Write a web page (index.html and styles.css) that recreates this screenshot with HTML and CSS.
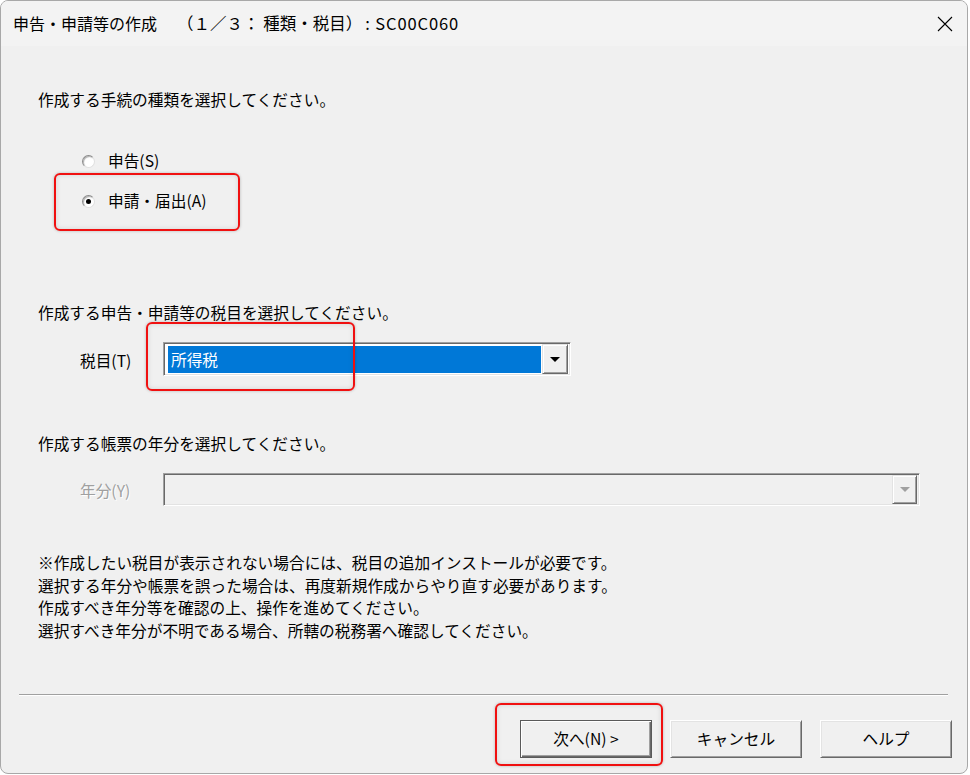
FILE: index.html
```html
<!DOCTYPE html>
<html lang="ja">
<head>
<meta charset="utf-8">
<title>申告・申請等の作成</title>
<link rel="stylesheet" href="styles.css">
</head>
<body>
<div class="window">
  <div class="titlebar">
    <span class="title"><span class="t1">申告・申請等の作成</span><span class="t2">（１／３： 種類・税目）</span><span class="t3">: SC00C060</span></span>
    <svg class="close" width="16" height="16" viewBox="0 0 16 16"><path d="M1 1 L15 15 M15 1 L1 15" stroke="#000" stroke-width="1.1" fill="none"/></svg>
  </div>
  <div class="content">
    <p class="q q1">作成する手続の種類を選択してください。</p>
    <div class="radios">
      <div class="radio"><span class="rb"></span><span>申告(S)</span></div>
      <div class="radio"><span class="rb checked"></span><span>申請・届出(A)</span></div>
    </div>
    <p class="q q2">作成する申告・申請等の税目を選択してください。</p>
    <div class="field">
      <span class="flabel">税目(T)</span>
      <div class="combo combo-tax">
        <div class="value selected">所得税</div>
        <div class="dd"><svg width="10" height="5" viewBox="0 0 10 5"><polygon points="0,0 10,0 5,5" fill="#000"/></svg></div>
      </div>
    </div>
    <p class="q q3">作成する帳票の年分を選択してください。</p>
    <div class="field field2">
      <span class="flabel disabled">年分(Y)</span>
      <div class="combo combo-year">
        <div class="value"></div>
        <div class="dd"><svg width="10" height="5" viewBox="0 0 10 5"><polygon points="0,0 10,0 5,5" fill="#a0a0a0"/></svg></div>
      </div>
    </div>
    <div class="notes">
      <p>※作成したい税目が表示されない場合には、税目の追加インストールが必要です。</p>
      <p>選択する年分や帳票を誤った場合は、再度新規作成からやり直す必要があります。</p>
      <p>作成すべき年分等を確認の上、操作を進めてください。</p>
      <p>選択すべき年分が不明である場合、所轄の税務署へ確認してください。</p>
    </div>
  </div>
  <div class="sep"></div>
  <div class="buttons">
    <button class="btn default">次へ(N) &gt;</button>
    <button class="btn">キャンセル</button>
    <button class="btn">ヘルプ</button>
  </div>
  <div class="mark mark1"></div>
  <div class="mark mark2"></div>
  <div class="mark mark3"></div>
</div>
</body>
</html>
```

FILE: styles.css
```css
* { box-sizing: border-box; }
html, body { margin: 0; padding: 0; background: #ffffff; }
body {
  font-family: "Noto Sans CJK JP", "Noto Sans", sans-serif;
  font-size: 15.7px;
  color: #000;
  text-spacing-trim: space-all;
}
.window {
  position: relative;
  width: 968px;
  height: 774px;
  border: 1px solid #a8a8a8;
  border-radius: 8px;
  background: #f0f0f0;
  overflow: hidden;
}
.titlebar {
  height: 45px;
  background: #f3f3f3;
  display: flex;
  align-items: center;
  justify-content: space-between;
  padding: 0 14px 0 12px;
}
.title {
  display: flex;
  align-items: baseline;
  line-height: 20px;
  margin-top: -1px;
  white-space: nowrap;
}
.t1 { font-size: 16px; }
.t2 { font-size: 16.5px; margin-left: 20px; }
.t3 { font-size: 16.5px; margin-left: 3px; letter-spacing: 0.9px; }
.close { display: block; }
.content {
  padding-left: 37px;
}
.q {
  margin: 0;
  line-height: 23px;
}
.q1 { margin-top: 42px; }
.radios {
  margin-top: 38px;
  padding-left: 44px;
  display: flex;
  flex-direction: column;
  gap: 16px;
}
.radio {
  height: 24px;
  display: flex;
  align-items: center;
  gap: 13px;
  line-height: 24px;
}
.rb {
  width: 13px;
  height: 13px;
  border-radius: 50%;
  background: #fff;
  border: 1px solid;
  border-color: #8a8a8a #e0e0e0 #e0e0e0 #8a8a8a;
  box-shadow: inset 1px 1px 1px #b0b0b0;
  display: flex;
  align-items: center;
  justify-content: center;
  flex: none;
}
.rb.checked::after {
  content: "";
  width: 5px;
  height: 5px;
  border-radius: 50%;
  background: #000;
}
.q2 { margin-top: 88px; }
.field {
  margin-top: 18px;
  padding-left: 42px;
  display: flex;
  align-items: center;
}
.flabel {
  width: 83px;
  line-height: 23px;
  padding-top: 2px;
}
.flabel.disabled {
  color: #a0a0a0;
  text-shadow: 1px 1px 0 #ffffff;
}
.combo {
  height: 34px;
  display: flex;
  border: 1px solid;
  border-color: #a0a0a0 #ffffff #ffffff #a0a0a0;
  box-shadow: inset 1px 1px 0 #696969, inset -1px -1px 0 #e3e3e3;
  padding: 2px;
  background: #ffffff;
}
.combo-tax { width: 408px; }
.value {
  flex: 1;
  color: #fff;
  line-height: 27px;
  padding-left: 3px;
  margin: 1px 1px 0 2px;
  height: 27px;
}
.value.selected { background: #0078d7; }
.dd {
  width: 26px;
  height: 30px;
  margin-top: -1px;
  background: #f0f0f0;
  border: 1px solid;
  border-color: #e3e3e3 #696969 #696969 #e3e3e3;
  box-shadow: inset 1px 1px 0 #ffffff, inset -1px -1px 0 #a0a0a0;
  display: flex;
  align-items: center;
  justify-content: center;
}
.dd svg { display: block; }
.field2 { margin-top: 18px; }
.combo-year {
  width: 757px;
  height: 33px;
  background: #f0f0f0;
}
.combo-year .dd { height: 29px; width: 25px; }
.q3 { margin-top: 56px; }
.notes {
  margin-top: 46px;
}
.notes p {
  margin: 0;
  line-height: 22.7px;
}
.sep {
  margin: 51px 0 0 18px;
  width: 929px;
  height: 2px;
  border-top: 1px solid #a0a0a0;
  border-bottom: 1px solid #ffffff;
}
.buttons {
  margin-top: 24px;
  display: flex;
  justify-content: flex-end;
  gap: 18px;
  padding-right: 15px;
}
.btn {
  width: 132px;
  height: 38px;
  font-family: inherit;
  font-size: 15.7px;
  color: #000;
  background: #f0f0f0;
  border: 1px solid;
  border-color: #ffffff #696969 #696969 #ffffff;
  box-shadow: inset 1px 1px 0 #e3e3e3, inset -1px -1px 0 #a0a0a0;
  padding: 0;
  line-height: 20px;
  text-spacing-trim: space-all;
}
.btn.default {
  border: 1px solid #5a5a5a;
  box-shadow: inset 1px 1px 0 #ffffff, inset -1px -1px 0 #696969, inset -2px -2px 0 #a0a0a0;
}
.mark {
  position: absolute;
  border: 2px solid #f01010;
  border-radius: 6px;
  box-shadow: 0 0 3px rgba(0,0,0,0.25), inset 0 0 5px rgba(0,0,0,0.12);
  pointer-events: none;
}
.mark1 { left: 53px; top: 172px; width: 186px; height: 58px; }
.mark2 { left: 145px; top: 321px; width: 209px; height: 69px; }
.mark3 { left: 494px; top: 702px; width: 168px; height: 63px; }
```
